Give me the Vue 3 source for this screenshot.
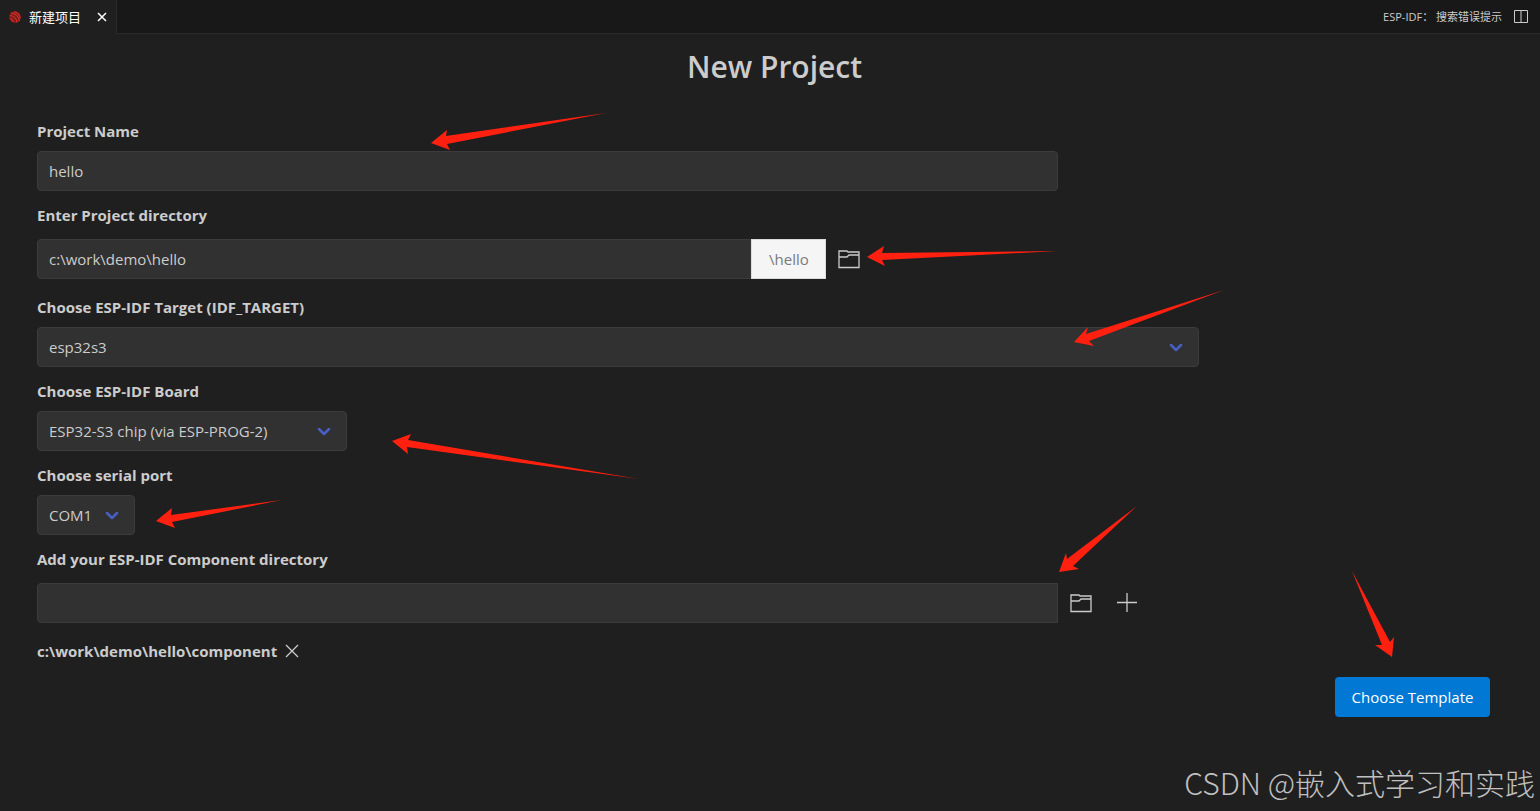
<template>
  <div class="page">
    <header class="tabbar">
      <div class="tab">
        <svg class="logo" viewBox="0 0 14 14" aria-hidden="true">
          <circle cx="7" cy="7" r="6" fill="#7d1d1c" />
          <path d="M2 5.500A8 8 0 0 1 9 12.500M3 3A9 9 0 0 1 11.500 11M6 1.500A9 9 0 0 1 12.500 8M2 8.500A4 4 0 0 1 5.500 12" />
        </svg>
        <span class="tab-title">新建项目</span>
        <button class="tab-close" aria-label="Close tab">
          <svg viewBox="0 0 10 10"><path d="M1 1l8 8M9 1l-8 8" /></svg>
        </button>
      </div>
      <div class="actions">
        <button class="hint">ESP-IDF： 搜索错误提示</button>
        <button class="split" aria-label="Split editor">
          <svg viewBox="0 0 14 13"><path d="M.5.5h13v12H.5zM7 .5v12" /></svg>
        </button>
      </div>
    </header>

    <main class="content">
      <h1>{{ title }}</h1>

      <div class="field">
        <label for="name">Project Name</label>
        <input id="name" class="control wide" type="text" v-model="form.name" />
      </div>

      <div class="field spaced">
        <label for="dir">Enter Project directory</label>
        <div class="row dir-row">
          <input id="dir" class="control joined" type="text" v-model="form.directory" />
          <span class="addon">\{{ form.name }}</span>
          <button class="icon" aria-label="Open folder">
            <svg class="folder" viewBox="0 0 22 19"><path d="M1 1h8l1 1h11v15.500H1zM1 7h8l2-2h10" /></svg>
          </button>
        </div>
      </div>

      <div class="field" v-for="item in selects" :key="item.id">
        <label :for="item.id">{{ item.label }}</label>
        <div class="select" :class="item.id">
          <select :id="item.id" class="control" v-model="form[item.id]">
            <option v-for="option in item.options" :key="option">{{ option }}</option>
          </select>
          <svg class="chevron" viewBox="0 0 14 9"><path d="M2 2l5 5 5-5" /></svg>
        </div>
      </div>

      <div class="field spaced">
        <label for="component">Add your ESP-IDF Component directory</label>
        <div class="row">
          <input id="component" class="control wide joined" type="text" v-model="form.component" />
          <button class="icon" aria-label="Open folder">
            <svg class="folder" viewBox="0 0 22 19"><path d="M1 1h8l1 1h11v15.500H1zM1 7h8l2-2h10" /></svg>
          </button>
          <button class="icon" aria-label="Add component" @click="addComponent">
            <svg class="plus" viewBox="0 0 20 20"><path d="M10 0v19M0 9.500h20" /></svg>
          </button>
        </div>
      </div>

      <div class="component" v-for="(path, index) in components" :key="path">
        <span>{{ path }}</span>
        <button aria-label="Remove component" @click="components.splice(index, 1)">
          <svg viewBox="0 0 14 14"><path d="M1 1l12 12M13 1L1 13" /></svg>
        </button>
      </div>

      <div class="footer">
        <button class="primary">Choose Template</button>
      </div>
    </main>

    <svg class="arrows" aria-hidden="true">
      <polygon v-for="points in arrows" :key="points" :points="points" />
    </svg>
    <div class="watermark">CSDN @嵌入式学习和实践</div>
  </div>
</template>

<script setup>
import { reactive, ref } from 'vue'

const title = 'New Project'

const form = reactive({
  name: 'hello',
  directory: 'c:\\work\\demo\\hello',
  target: 'esp32s3',
  board: 'ESP32-S3 chip (via ESP-PROG-2)',
  port: 'COM1',
  component: '',
})

const selects = [
  { id: 'target', label: 'Choose ESP-IDF Target (IDF_TARGET)', options: ['esp32s3'] },
  { id: 'board', label: 'Choose ESP-IDF Board', options: ['ESP32-S3 chip (via ESP-PROG-2)'] },
  { id: 'port', label: 'Choose serial port', options: ['COM1'] },
]

const components = ref(['c:\\work\\demo\\hello\\component'])

const addComponent = () => {
  if (!form.component) return
  components.value.push(form.component)
  form.component = ''
}

const arrows = [
  '431,143 447,130 446,136 606,113 447,144 450,150',
  '867,257 884,246 882,253 1058,251 882,260 885,266',
  '1074,342 1088,327 1086,334 1224,290 1089,341 1094,346',
  '392,441 411,434 408,440 639,479 407,447 408,454',
  '156,521 172,508 171,515 282,500 172,522 175,528',
  '1059,572 1066,553 1067,559 1137,506 1073,566 1079,569',
  '1392,657 1394,637 1390,642 1352,571 1382,645 1375,645',
]
</script>

<style>
body {
  margin: 0;
  background: #1f1f1f;
}
</style>

<style scoped>
.page {
  position: relative;
  min-height: 100vh;
  overflow: hidden;
  background: #1f1f1f;
  color: #cccccc;
  font-family: "Open Sans", "Noto Sans CJK SC", sans-serif;
  font-size: 15px;
  line-height: 24px;
}

button {
  padding: 0;
  border: 0;
  background: none;
  color: inherit;
  font: inherit;
  cursor: pointer;
}

svg {
  display: block;
}

path {
  fill: none;
  stroke: currentColor;
}

.tabbar {
  display: flex;
  height: 34px;
  background: #181818;
}

.tab {
  display: flex;
  align-items: center;
  box-sizing: border-box;
  width: 117px;
  padding-left: 8px;
  border-right: 1px solid #2b2b2b;
  background: #1f1f1f;
  color: #ffffff;
  font-size: 13px;
}

.logo {
  width: 14px;
  height: 14px;
  margin-right: 7px;
  color: #e5332d;
}

.tab-close {
  margin-left: 16px;
}

.tab-close svg {
  width: 10px;
  height: 10px;
  stroke-width: 1.5;
}

.actions {
  display: flex;
  flex: 1;
  align-items: center;
  justify-content: flex-end;
  gap: 12px;
  padding-right: 12px;
  border-bottom: 1px solid #2b2b2b;
}

.hint {
  font-size: 11px;
}

.split svg {
  width: 14px;
  height: 13px;
}

.content {
  padding: 15px 50px 24px 37px;
}

h1 {
  margin: 0 -22px 34px 0;
  font-size: 30px;
  font-weight: 600;
  line-height: 36px;
  text-align: center;
}

.field {
  margin-bottom: 12px;
}

label {
  display: block;
  margin-bottom: 8px;
  font-weight: 700;
}

.spaced {
  margin-bottom: 16px;
}

.spaced label {
  margin-bottom: 12px;
}

.control {
  display: block;
  box-sizing: border-box;
  width: 100%;
  height: 40px;
  padding: 0 11px;
  border: 1px solid #3c3c3c;
  border-radius: 4px;
  outline: none;
  appearance: none;
  background: #313131;
  color: #cccccc;
  font: inherit;
}

.wide {
  width: calc(80% - 141px);
}

.row {
  display: flex;
}

.dir-row {
  width: calc(80% - 327px);
}

.joined {
  border-radius: 4px 0 0 4px;
}

.addon {
  box-sizing: border-box;
  flex: 0 0 75px;
  border: 1px solid #dbdbdb;
  background: #f5f5f5;
  color: #7a7a7a;
  line-height: 38px;
  text-align: center;
}

.icon {
  display: flex;
  flex: 0 0 46px;
  align-items: center;
  justify-content: center;
}

.folder {
  width: 22px;
  height: 19px;
  stroke-width: 1.3;
}

.plus {
  width: 20px;
  height: 20px;
  stroke-width: 1.3;
}

.select {
  position: relative;
}

.target {
  width: 80%;
}

.board {
  width: 310px;
}

.port {
  width: 98px;
}

.chevron {
  position: absolute;
  top: 16px;
  right: 16px;
  width: 14px;
  height: 9px;
  color: #485fc7;
  stroke-width: 2.5;
  stroke-linecap: round;
  stroke-linejoin: round;
  pointer-events: none;
}

.component {
  display: flex;
  align-items: center;
  gap: 8px;
  font-weight: 700;
}

.component svg {
  width: 14px;
  height: 14px;
  stroke-width: 1.3;
}

.footer {
  display: flex;
  justify-content: flex-end;
  margin-top: 14px;
}

.primary {
  width: 155px;
  height: 40px;
  border-radius: 4px;
  background: #0078d4;
  color: #ffffff;
}

.arrows {
  position: absolute;
  top: 0;
  left: 0;
  width: 100%;
  height: 100%;
  fill: #ff2010;
  pointer-events: none;
}

.watermark {
  position: absolute;
  right: 5px;
  bottom: 9px;
  color: #c0c0c0;
  font-family: "Noto Sans CJK SC", sans-serif;
  font-size: 30px;
  font-weight: 300;
  line-height: 40px;
  pointer-events: none;
}
</style>
